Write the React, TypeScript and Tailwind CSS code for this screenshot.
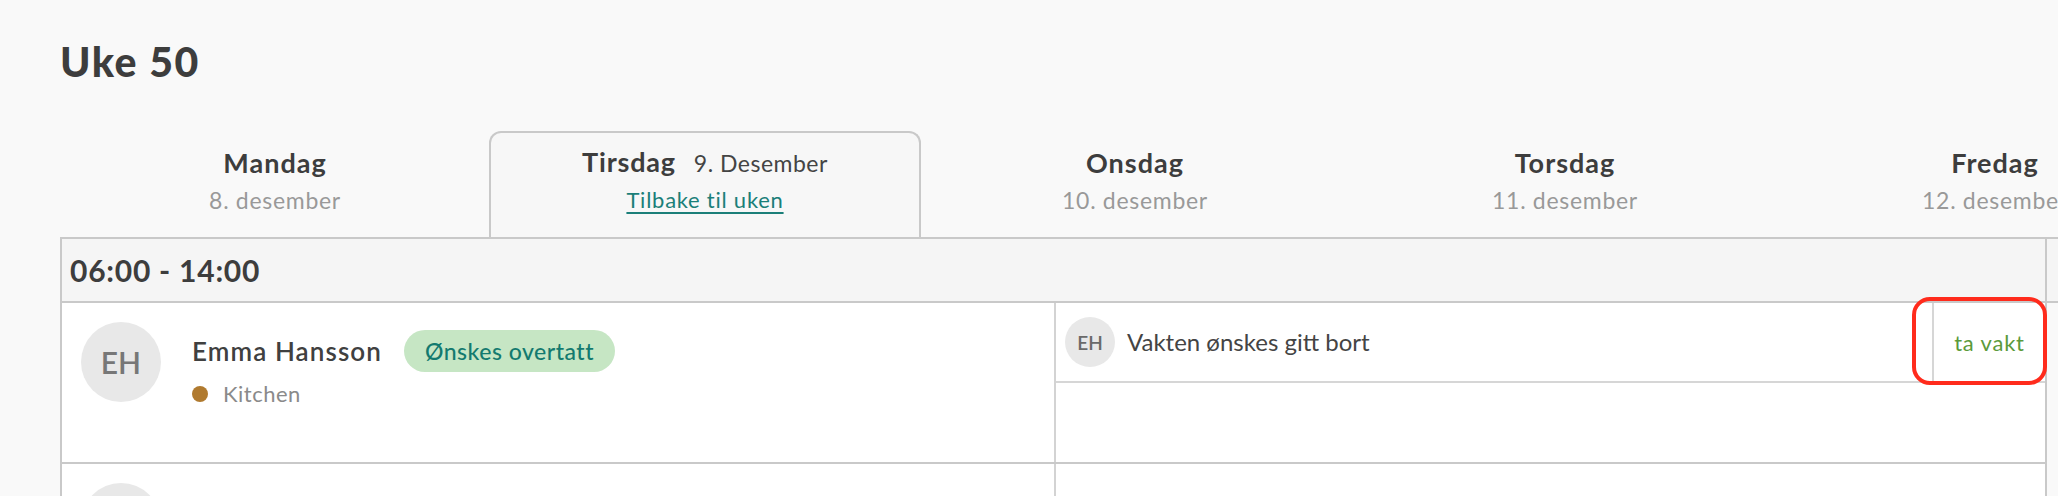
import React from "react";

const days = [
  { name: "Mandag", date: "8. desember" },
  { name: "Tirsdag", date: "9. Desember", active: true },
  { name: "Onsdag", date: "10. desember" },
  { name: "Torsdag", date: "11. desember" },
  { name: "Fredag", date: "12. desember" },
  { name: "Lørdag", date: "13. desember" },
];

function Avatar({ size, text }: { size: "lg" | "sm"; text: string }) {
  if (size === "lg") {
    return (
      <div className="flex h-[80px] w-[80px] flex-none items-center justify-center rounded-full bg-[#e8e8e8] text-[30px] font-semibold leading-none text-[#777777]">
        {text}
      </div>
    );
  }
  return (
    <div className="flex h-[50px] w-[50px] flex-none items-center justify-center rounded-full bg-[#e8e8e8] text-[19px] font-semibold leading-none text-[#6a6a6a]">
      {text}
    </div>
  );
}

export default function App() {
  return (
    <div className="relative h-[496px] w-[2058px] overflow-hidden bg-[#f9f9f9] font-[Lato,'Noto_Sans',sans-serif] text-[#404040]">
      <div className="pl-[60px]">
        <h1 className="pt-[42px] text-[41px] font-black leading-[40px] tracking-[1.5px] text-[#3d3d3d]">
          Uke 50
        </h1>

        {/* Day tabs */}
        <div className="mt-[49px] flex h-[106px]">
          {days.map((d) =>
            d.active ? (
              <div
                key={d.name}
                className="-mx-px flex h-[106px] w-[432px] flex-none flex-col items-center rounded-t-[12px] border-2 border-b-0 border-[#c9c9c9] bg-[#f7f7f7] pt-[13px]"
              >
                <div className="flex items-baseline leading-[32px]">
                  <span className="text-[27px] font-bold tracking-[0.8px] text-[#3d3d3d]">{d.name}</span>
                  <span className="ml-[18px] text-[23px] tracking-[0.5px] text-[#444444]">{d.date}</span>
                </div>
                <a className="mt-[6px] text-[22px] leading-[30px] tracking-[0.75px] text-[#1b7f79] underline decoration-[2px] underline-offset-[4px]">
                  Tilbake til uken
                </a>
              </div>
            ) : (
              <div key={d.name} className="flex w-[430px] flex-none flex-col items-center pt-[16px]">
                <span className="text-[27px] font-bold leading-[32px] tracking-[1px] text-[#3d3d3d]">{d.name}</span>
                <span className="mt-[6px] text-[23px] leading-[30px] tracking-[0.7px] text-[#999999]">{d.date}</span>
              </div>
            )
          )}
        </div>

        {/* Table */}
        <div className="flex">
          <div className="w-[1987px] flex-none border-2 border-b-0 border-[#c9c9c9] bg-white">
            <div className="flex h-[64px] items-center border-b-2 border-[#c9c9c9] bg-[#f5f5f5] pl-[8px]">
              <span className="text-[30px] font-bold leading-[36px] tracking-[0.75px] text-[#3d3d3d]">06:00 - 14:00</span>
            </div>

            <div className="flex h-[161px] border-b-2 border-[#c9c9c9]">
              <div className="flex w-[992px] flex-none pl-[19px] pt-[19px]">
                <Avatar size="lg" text="EH" />
                <div className="ml-[31px] pt-[8px]">
                  <div className="flex h-[42px] items-center">
                    <span className="text-[26px] font-semibold leading-[32px] tracking-[1.1px] text-[#404040]">Emma Hansson</span>
                    <span className="ml-[22px] flex h-[42px] items-center rounded-full bg-[#c6e6c4] px-[21px] text-[23px] font-medium tracking-[0.5px] text-[#137a6f]">
                      Ønskes overtatt
                    </span>
                  </div>
                  <div className="mt-[8px] flex items-center leading-[28px]">
                    <span className="h-[16px] w-[16px] rounded-full bg-[#b07a2f]" />
                    <span className="ml-[15px] text-[22px] tracking-[0.5px] text-[#8a8a8a]">Kitchen</span>
                  </div>
                </div>
              </div>
              <div className="flex flex-1 flex-col border-l-2 border-[#d3d3d3]">
                <div className="flex h-[80px] border-b-2 border-[#d6d6d6]">
                  <div className="flex flex-1 items-center pl-[9px]">
                    <Avatar size="sm" text="EH" />
                    <span className="ml-[12px] text-[24px] leading-[30px] text-[#444444]">Vakten ønskes gitt bort</span>
                  </div>
                  <div className="flex w-[113px] flex-none items-center justify-center border-l-2 border-[#d6d6d6] text-[22px] tracking-[0.8px] text-[#5b9a3b]">
                    ta vakt
                  </div>
                </div>
                <div className="flex-1" />
              </div>
            </div>

            <div className="flex h-[80px]">
              <div className="flex w-[992px] flex-none pl-[19px] pt-[19px]">
                <Avatar size="lg" text="OL" />
              </div>
              <div className="flex-1 border-l-2 border-[#d3d3d3]" />
            </div>
          </div>

          <div className="w-[200px] flex-none border-t-2 border-[#c9c9c9]">
            <div className="h-[64px] border-b-2 border-[#c9c9c9] bg-[#f5f5f5]" />
          </div>
        </div>
      </div>

      {/* Red highlight annotation */}
      <div className="pointer-events-none absolute left-[1912px] top-[297px] h-[88px] w-[135px] rounded-[18px] border-[4px] border-[#ff2b1c]" />
    </div>
  );
}
